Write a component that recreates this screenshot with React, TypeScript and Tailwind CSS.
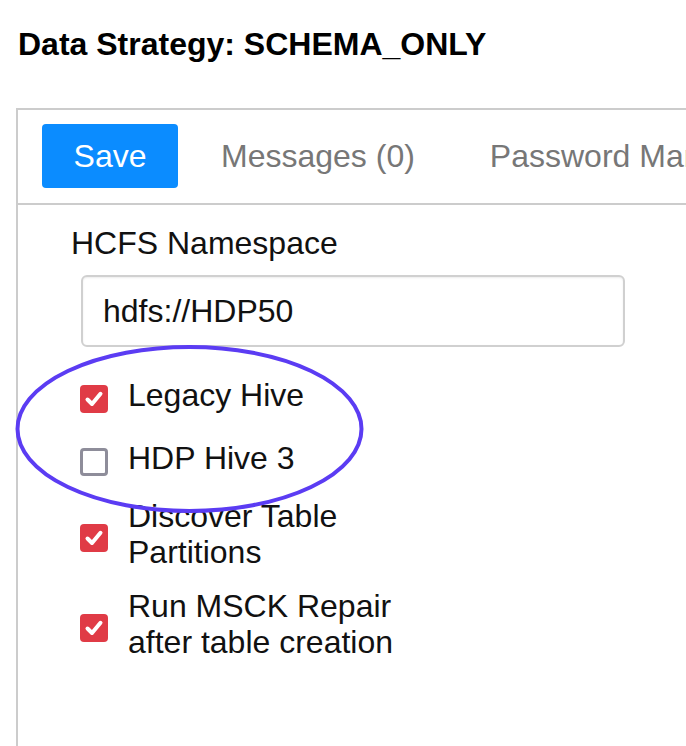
import { useState } from 'react';

type Option = { id: string; label: string; checked: boolean; gap: string };

const initialOptions: Option[] = [
  { id: 'legacy', label: 'Legacy Hive', checked: true, gap: 'mt-[30px]' },
  { id: 'hdp3', label: 'HDP Hive 3', checked: false, gap: 'mt-[27px]' },
  { id: 'partitions', label: 'Discover Table Partitions', checked: true, gap: 'mt-[22px]' },
  { id: 'msck', label: 'Run MSCK Repair after table creation', checked: true, gap: 'mt-[18px]' },
];

function Checkbox({ checked, onClick }: { checked: boolean; onClick: () => void }) {
  if (!checked) {
    return (
      <button
        onClick={onClick}
        className="mt-[8px] h-[28px] w-[28px] flex-none rounded-[4px] border-[3px] border-[#8e8d9a] bg-white"
      />
    );
  }
  return (
    <button
      onClick={onClick}
      className="mt-[8px] flex h-[28px] w-[28px] flex-none items-center justify-center rounded-[4px] bg-[#e03b46]"
    >
      <svg width="28" height="28" viewBox="0 0 28 28" fill="none">
        <path
          d="M7.5 14.5 L12 19 L20.5 8.8"
          stroke="white"
          strokeWidth="4"
          strokeLinecap="round"
          strokeLinejoin="round"
        />
      </svg>
    </button>
  );
}

export default function App() {
  const [options, setOptions] = useState(initialOptions);
  const [namespace, setNamespace] = useState('hdfs://HDP50');

  const toggle = (id: string) =>
    setOptions((prev) => prev.map((o) => (o.id === id ? { ...o, checked: !o.checked } : o)));

  return (
    <div className="relative h-[746px] w-[686px] overflow-hidden bg-white font-['Liberation_Sans',Arial,sans-serif] text-[#111]">
      {/* Title */}
      <h1 className="pl-[18px] pt-[26px] text-[32px] font-bold leading-[36px] text-black">
        Data Strategy: SCHEMA_ONLY
      </h1>

      {/* Panel */}
      <div className="ml-[16px] mt-[46px] h-[700px] w-[760px] border-l-2 border-t-2 border-[#cccccc]">
        {/* Tab bar */}
        <div className="flex h-[95px] items-center whitespace-nowrap border-b-2 border-[#cccccc] pb-[1px] pl-[24px]">
          <button className="flex h-[64px] w-[136px] flex-none items-center justify-center rounded-[4px] bg-[#0b8cff] text-[32px] text-white">
            Save
          </button>
          <span className="ml-[43px] flex-none text-[32px] text-[#777777]">Messages (0)</span>
          <span className="ml-[75px] flex-none text-[32px] text-[#777777]">Password Management</span>
        </div>

        {/* Form */}
        <div className="pl-[53px] pt-[20px]">
          <div className="text-[32px] leading-[36px]">HCFS Namespace</div>
          <input
            value={namespace}
            onChange={(e) => setNamespace(e.target.value)}
            className="ml-[10px] mt-[14px] block h-[72px] w-[544px] rounded-[6px] border-2 border-[#d0d0d0] pl-[20px] text-[32px] text-[#111] shadow-[inset_0_1px_2px_rgba(0,0,0,0.08)] outline-none"
          />

          {options.map((o) => (
            <div key={o.id} className={`${o.gap} ml-[9px] flex items-center gap-[20px]`}>
              <Checkbox checked={o.checked} onClick={() => toggle(o.id)} />
              <span className="w-[290px] text-[32px] leading-[36px]">{o.label}</span>
            </div>
          ))}
        </div>
      </div>

      {/* Annotation ellipse */}
      <svg
        className="pointer-events-none absolute left-0 top-[330px]"
        width="400"
        height="200"
        viewBox="0 0 400 200"
        fill="none"
      >
        <ellipse cx="189.5" cy="99" rx="172" ry="82" stroke="#5b3cf3" strokeWidth="4" />
      </svg>
    </div>
  );
}
